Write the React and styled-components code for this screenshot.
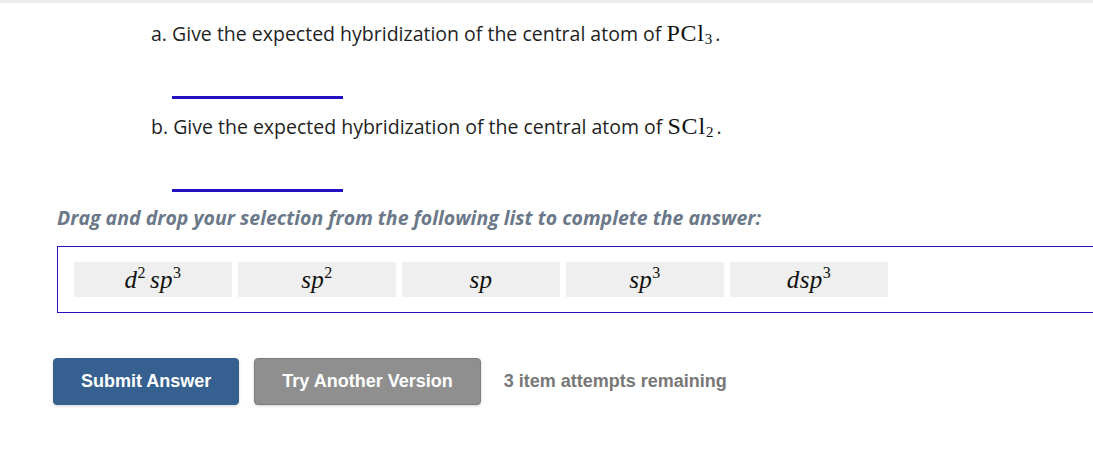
import React from "react";
import styled, { createGlobalStyle } from "styled-components";

const GlobalStyle = createGlobalStyle`
	body {
		margin: 0;
		background: #ffffff;
		font-family: "Open Sans", "Liberation Sans", sans-serif;
		color: #222222;
	}
`;

const choices = [
	{ key: "d2sp3", parts: ["d", "2", "sp", "3"] },
	{ key: "sp2", parts: ["", "", "sp", "2"] },
	{ key: "sp", parts: ["", "", "sp", ""] },
	{ key: "sp3", parts: ["", "", "sp", "3"] },
	{ key: "dsp3", parts: ["", "", "dsp", "3"] },
];

const questions = [
	{ label: "a.", formula: "PCl", sub: "3" },
	{ label: "b.", formula: "SCl", sub: "2" },
];

export default () => {
	return (
		<Page>
			<GlobalStyle />
			<TopStrip />
			<Questions>
				{questions.map((q, i) => (
					<Question key={q.label} first={i === 0}>
						<QuestionText>
							{q.label} Give the expected hybridization of the central atom of{" "}
							<Formula>
								{q.formula}
								<sub>{q.sub}</sub>
							</Formula>
							<Dot>.</Dot>
						</QuestionText>
						<Blank />
					</Question>
				))}
			</Questions>
			<Instruction>
				Drag and drop your selection from the following list to complete the
				answer:
			</Instruction>
			<DropZone>
				{choices.map((c) => (
					<Tile key={c.key}>
						<MathText>
							{c.parts[0] && (
								<>
									{c.parts[0]}
									<sup>{c.parts[1]}</sup>
									<Thin />
								</>
							)}
							{c.parts[2]}
							{c.parts[3] && <sup>{c.parts[3]}</sup>}
						</MathText>
					</Tile>
				))}
			</DropZone>
			<Actions>
				<Button primary>Submit Answer</Button>
				<Button>Try Another Version</Button>
				<Attempts>3 item attempts remaining</Attempts>
			</Actions>
		</Page>
	);
};

const Page = styled.div`
	width: 100%;
	min-height: 461px;
	overflow: hidden;
`;

const TopStrip = styled.div`
	height: 3px;
	background: #ececec;
`;

const Questions = styled.div`
	display: flex;
	flex-direction: column;
	padding-left: 151px;
	padding-top: 17px;
`;

const Question = styled.div`
	display: flex;
	flex-direction: column;
	margin-top: ${(p) => (p.first ? "0" : "14px")};
`;

const QuestionText = styled.div`
	font-size: 19.5px;
	line-height: 26px;
	height: 26px;
	color: #1f1f1f;
	white-space: nowrap;
`;

const Formula = styled.span`
	font-family: "Liberation Serif", "DejaVu Serif", serif;
	font-size: 24px;
	letter-spacing: 0.8px;
	color: #111111;
	sub {
		font-size: 15px;
		letter-spacing: 0;
		vertical-align: -3px;
		line-height: 0;
	}
`;

const Dot = styled.span`
	margin-left: 3px;
`;

const Blank = styled.div`
	width: 171px;
	height: 3px;
	margin-top: 50px;
	margin-left: 21px;
	background: #2310c2;
`;

const Instruction = styled.div`
	margin: 13px 0 0 57px;
	font-size: 19.5px;
	line-height: 26px;
	font-weight: 700;
	font-style: italic;
	color: #6b7889;
	white-space: nowrap;
`;

const DropZone = styled.div`
	display: flex;
	gap: 6px;
	margin: 15px 0 0 57px;
	width: 1100px;
	height: 67px;
	padding: 15px 16px;
	border: 1px solid #2310c2;
	box-sizing: border-box;
`;

const Tile = styled.div`
	display: flex;
	align-items: center;
	justify-content: center;
	width: 158px;
	height: 35px;
	background: #efefef;
`;

const MathText = styled.span`
	font-family: "Liberation Serif", "DejaVu Serif", serif;
	font-style: italic;
	font-size: 25px;
	letter-spacing: 0.5px;
	color: #111111;
	line-height: 1;
	sup {
		font-size: 16px;
		font-style: normal;
		vertical-align: 10px;
		line-height: 0;
	}
`;

const Thin = styled.span`
	display: inline-block;
	width: 4px;
`;

const Actions = styled.div`
	display: flex;
	align-items: center;
	gap: 15px;
	margin: 45px 0 0 53px;
`;

const Button = styled.button`
	height: 47px;
	padding: 0 27px;
	border-radius: 4px;
	border: 1px solid ${(p) => (p.primary ? "#35608f" : "#7d7d7d")};
	background: ${(p) => (p.primary ? "#35608f" : "#8f8f8f")};
	color: #ffffff;
	font-family: "Liberation Sans", Arial, sans-serif;
	font-size: 18px;
	font-weight: 700;
	box-shadow: 0 1px 3px rgba(0, 0, 0, 0.18);
`;

const Attempts = styled.span`
	margin-left: 8px;
	font-family: "Liberation Sans", Arial, sans-serif;
	font-size: 18px;
	font-weight: 700;
	color: #787878;
`;
